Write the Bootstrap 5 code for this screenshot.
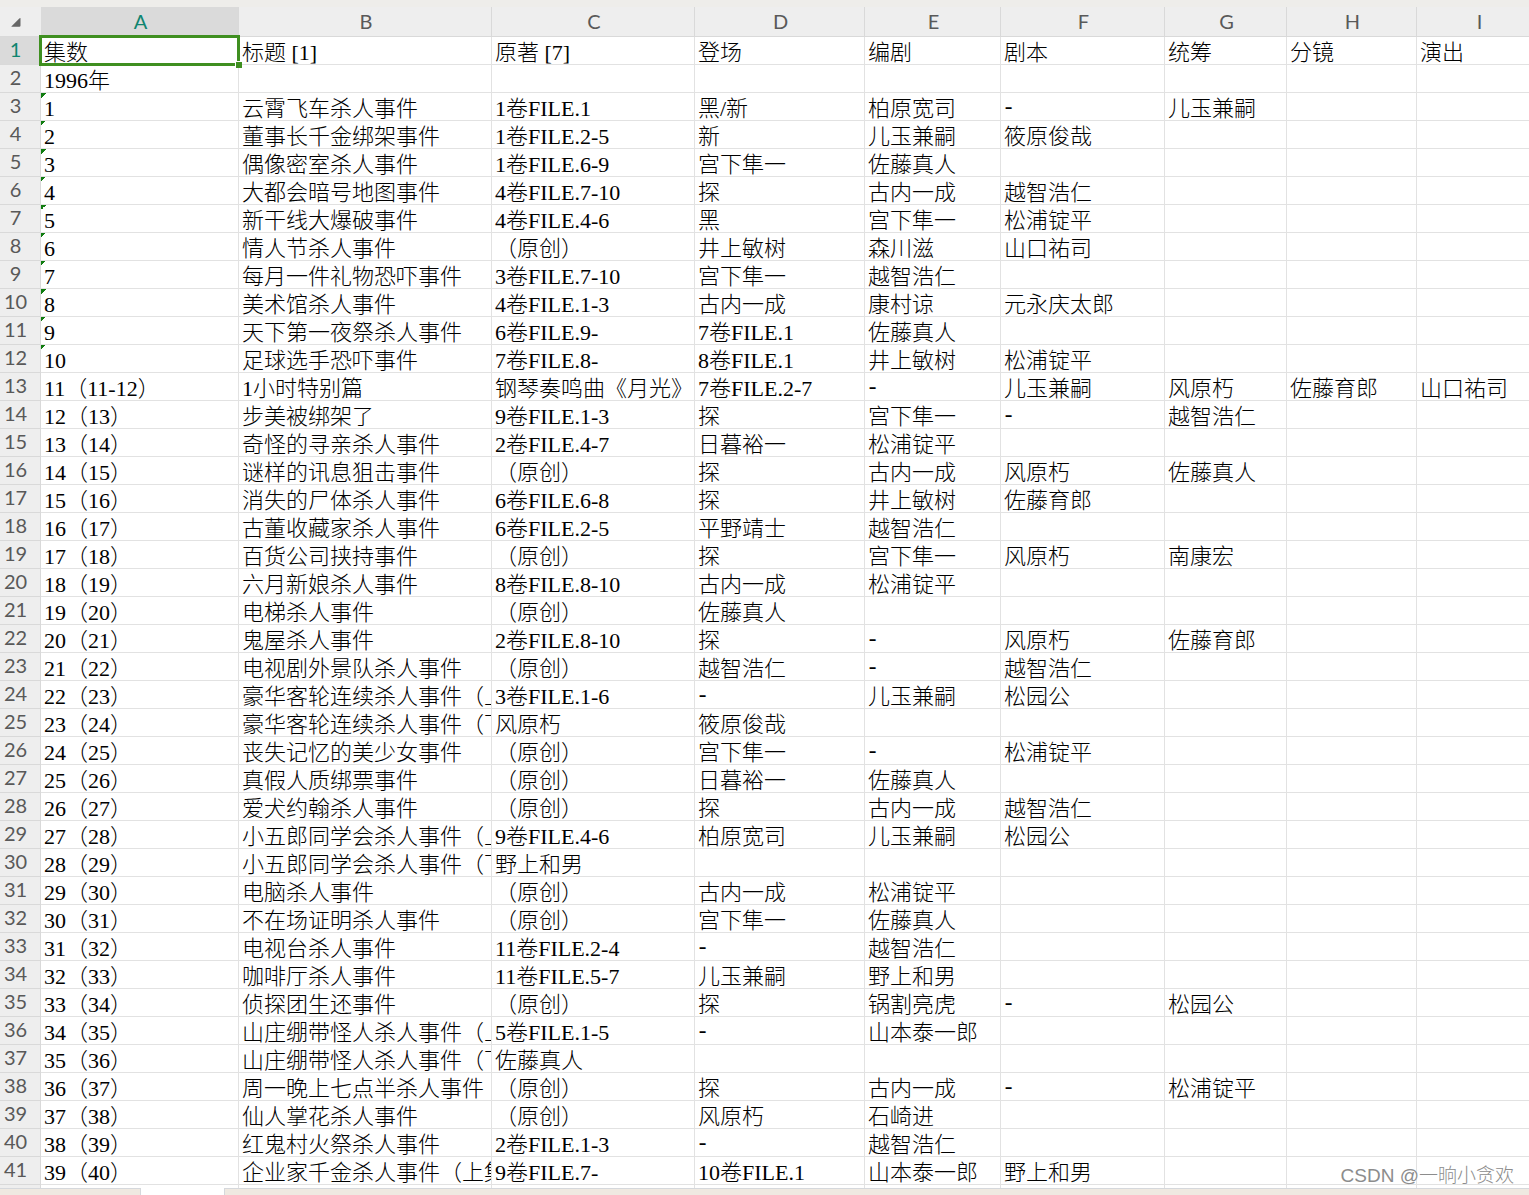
<!DOCTYPE html>
<html lang="zh-CN">
<head>
<meta charset="utf-8">
<meta name="viewport" content="width=device-width, initial-scale=1">
<title>集数表</title>
<link href="https://cdn.jsdelivr.net/npm/bootstrap@5.3.0/dist/css/bootstrap.min.css" rel="stylesheet">
<style>
  body { background: #fff; }
  .top-strip { height: 7px; background: #eeedea; }
  .sheet { min-height: 0; }
  .grid {
    table-layout: fixed; width: 1541px; min-width: 100%;
    border-collapse: separate; border-spacing: 0;
    font-family: "Liberation Serif", "Noto Sans CJK SC", serif;
    font-size: 22px; line-height: 23px; font-weight: 300; color: #000;
    text-spacing-trim: space-all;
  }
  .grid th, .grid td { overflow: hidden; white-space: nowrap; border: 0 solid #e2e2e2; border-width: 0 1px 1px 0; }
  .grid td { height: 28px; padding: 4px 0 0 3px; }
  .grid th {
    font-family: Lato, sans-serif; font-size: 20px; font-weight: 400; color: #595959;
    background: #eee; border-color: #d9d9d9; text-align: center; padding: 0;
  }
  .grid thead th { height: 30px; padding-left: 2px; }
  .grid tbody th { padding: 0 9px 3px 0; }
  .grid th.active { background: #dadada; color: #0f8570; }
  .grid thead th.corner { padding: 2px 0 0 11px; border-right-color: #eee; }
  .grid td.picked { position: relative; overflow: visible; }
  .picked::before { content: ""; position: absolute; inset: -2px; border: 3px solid #3f8f20; }
  .picked::after { content: ""; position: absolute; right: -4px; bottom: -4px; width: 7px; height: 7px; background: #3f8f20; border: solid #fff; border-width: 1px 0 0 1px; }
  .grid td.flagged { background: linear-gradient(135deg, #107c10 50%, transparent 50%) 0 0 / 5px 5px no-repeat; }
  .grid td.dash { font-family: "Liberation Mono", monospace; padding-left: 1px; }
  .tab-bar { height: 7px; }
  .tab-bar div { background: #efe9e1; border-top: 1px solid #d5d8dc; }
  .tab-left { width: 141px; border-right: 1px solid #d5d8dc; }
  .tab-open { width: 83px; }
  .tab-rest { border-left: 1px solid #d5d8dc; }
  .watermark {
    right: 15px; bottom: 5px; font: 19px/28px "Liberation Sans", "Noto Sans CJK SC", sans-serif;
    font-weight: 300; color: #8c8c8c; text-shadow: 0 0 1px #fff;
  }
</style>
</head>
<body>
<main class="d-flex flex-column vh-100 overflow-hidden position-relative">
  <div class="top-strip flex-shrink-0"></div>
  <div class="sheet flex-grow-1 overflow-hidden">
    <table class="grid">
      <colgroup>
        <col style="width:41px"><col style="width:198px"><col style="width:253px"><col style="width:203px"><col style="width:170px"><col style="width:136px"><col style="width:164px"><col style="width:122px"><col style="width:130px"><col>
      </colgroup>
      <thead>
        <tr>
          <th class="corner"><svg class="d-block" width="10" height="9" viewBox="0 0 10 9" aria-hidden="true"><path d="M9.500 .3V7.500Q9.500 8.700 8.300 8.700H1Q0 8.700 .8 7.900L8.600 .3Q9.200 -.2 9.500 .3Z" fill="#666"/></svg></th>
          <th class="active" scope="col">A</th><th scope="col">B</th><th scope="col">C</th><th scope="col">D</th><th scope="col">E</th><th scope="col">F</th><th scope="col">G</th><th scope="col">H</th><th scope="col">I</th>
        </tr>
      </thead>
      <tbody id="rows"></tbody>
    </table>
  </div>
  <div class="tab-bar d-flex flex-shrink-0">
    <div class="tab-left"></div><span class="tab-open"></span><div class="tab-rest flex-grow-1"></div>
  </div>
  <span class="watermark position-absolute">CSDN @一晌小贪欢</span>
</main>
<script>
const data = `集数|标题 [1]|原著 [7]|登场|编剧|剧本|统筹|分镜|演出
1996年
1|云霄飞车杀人事件|1卷FILE.1|黑/新|柏原宽司|-|儿玉兼嗣
2|董事长千金绑架事件|1卷FILE.2-5|新|儿玉兼嗣|筱原俊哉
3|偶像密室杀人事件|1卷FILE.6-9|宫下隼一|佐藤真人
4|大都会暗号地图事件|4卷FILE.7-10|探|古内一成|越智浩仁
5|新干线大爆破事件|4卷FILE.4-6|黑|宫下隼一|松浦锭平
6|情人节杀人事件|（原创）|井上敏树|森川滋|山口祐司
7|每月一件礼物恐吓事件|3卷FILE.7-10|宫下隼一|越智浩仁
8|美术馆杀人事件|4卷FILE.1-3|古内一成|康村谅|元永庆太郎
9|天下第一夜祭杀人事件|6卷FILE.9-|7卷FILE.1|佐藤真人
10|足球选手恐吓事件|7卷FILE.8-|8卷FILE.1|井上敏树|松浦锭平
11（11-12）|1小时特别篇|钢琴奏鸣曲《月光》|7卷FILE.2-7|-|儿玉兼嗣|风原朽|佐藤育郎|山口祐司
12（13）|步美被绑架了|9卷FILE.1-3|探|宫下隼一|-|越智浩仁
13（14）|奇怪的寻亲杀人事件|2卷FILE.4-7|日暮裕一|松浦锭平
14（15）|谜样的讯息狙击事件|（原创）|探|古内一成|风原朽|佐藤真人
15（16）|消失的尸体杀人事件|6卷FILE.6-8|探|井上敏树|佐藤育郎
16（17）|古董收藏家杀人事件|6卷FILE.2-5|平野靖士|越智浩仁
17（18）|百货公司挟持事件|（原创）|探|宫下隼一|风原朽|南康宏
18（19）|六月新娘杀人事件|8卷FILE.8-10|古内一成|松浦锭平
19（20）|电梯杀人事件|（原创）|佐藤真人
20（21）|鬼屋杀人事件|2卷FILE.8-10|探|-|风原朽|佐藤育郎
21（22）|电视剧外景队杀人事件|（原创）|越智浩仁|-|越智浩仁
22（23）|豪华客轮连续杀人事件（上集）|3卷FILE.1-6|-|儿玉兼嗣|松园公
23（24）|豪华客轮连续杀人事件（下集）|风原朽|筱原俊哉
24（25）|丧失记忆的美少女事件|（原创）|宫下隼一|-|松浦锭平
25（26）|真假人质绑票事件|（原创）|日暮裕一|佐藤真人
26（27）|爱犬约翰杀人事件|（原创）|探|古内一成|越智浩仁
27（28）|小五郎同学会杀人事件（上集）|9卷FILE.4-6|柏原宽司|儿玉兼嗣|松园公
28（29）|小五郎同学会杀人事件（下集）|野上和男
29（30）|电脑杀人事件|（原创）|古内一成|松浦锭平
30（31）|不在场证明杀人事件|（原创）|宫下隼一|佐藤真人
31（32）|电视台杀人事件|11卷FILE.2-4|-|越智浩仁
32（33）|咖啡厅杀人事件|11卷FILE.5-7|儿玉兼嗣|野上和男
33（34）|侦探团生还事件|（原创）|探|锅割亮虎|-|松园公
34（35）|山庄绷带怪人杀人事件（上集）|5卷FILE.1-5|-|山本泰一郎
35（36）|山庄绷带怪人杀人事件（下集）|佐藤真人
36（37）|周一晚上七点半杀人事件|（原创）|探|古内一成|-|松浦锭平
37（38）|仙人掌花杀人事件|（原创）|风原朽|石崎进
38（39）|红鬼村火祭杀人事件|2卷FILE.1-3|-|越智浩仁
39（40）|企业家千金杀人事件（上集）|9卷FILE.7-|10卷FILE.1|山本泰一郎|野上和男
`.split("\n");

const body = document.getElementById("rows");
data.forEach((line, i) => {
  const tr = body.insertRow();
  const head = document.createElement("th");
  head.scope = "row";
  if (line) head.textContent = i + 1;
  if (i === 0) head.className = "active";
  tr.append(head);
  const cells = line.split("|");
  for (let c = 0; c < 9; c++) {
    const td = tr.insertCell();
    td.textContent = cells[c] || "";
    if (cells[c] === "-") td.className = "dash";
    if (i === 0 && c === 0) td.className = "picked";
    // numbers stored as text carry the green corner flag
    if (c === 0 && /^\d+$/.test(cells[0])) td.className = "flagged";
  }
});
</script>
<script src="https://cdn.jsdelivr.net/npm/bootstrap@5.3.0/dist/js/bootstrap.bundle.min.js"></script>
</body>
</html>
